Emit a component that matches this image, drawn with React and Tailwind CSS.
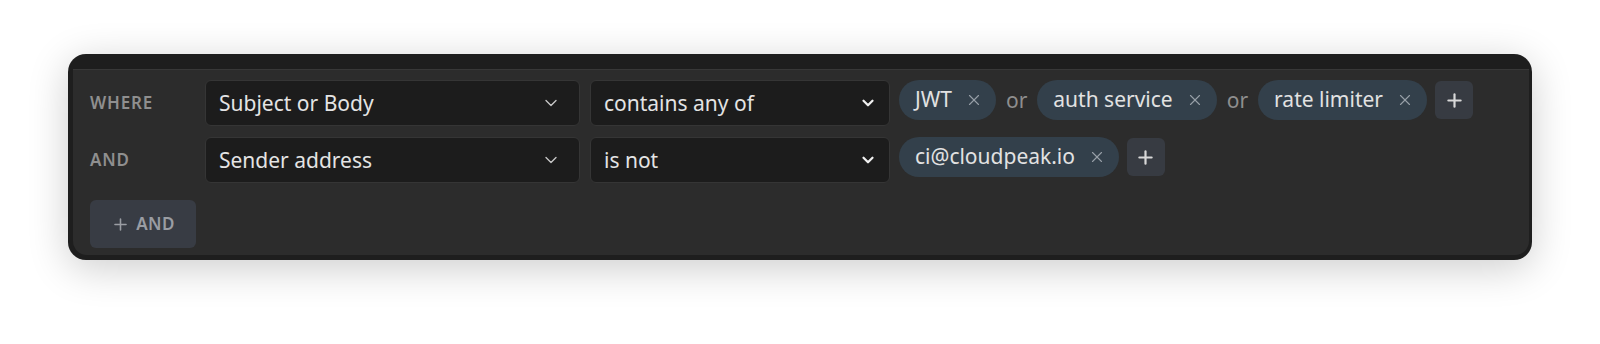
import { ChevronDown, X, Plus } from "lucide-react";

function Chip({ label }) {
  return (
    <div className="flex h-[40px] items-center gap-[13px] rounded-full bg-[#33404b] pl-[16px] pr-[13px] text-[21px] text-[#e2e2e2]">
      <span>{label}</span>
      <X size={18} strokeWidth={1.5} className="text-[#98a0a8]" />
    </div>
  );
}

function AddButton() {
  return (
    <button className="flex h-[38px] w-[38px] items-center justify-center rounded-md bg-[#373b42] text-[#d8d8d8]">
      <Plus size={21} strokeWidth={2.5} />
    </button>
  );
}

function Select({ value, width, native }) {
  return (
    <div
      className={`flex h-[46px] shrink-0 items-center justify-between rounded-md border border-[#353535] bg-[#1c1c1c] pl-[13px] text-[21px] text-[#e4e4e4] ${width} ${
        native ? "pr-[12px]" : "pr-[18px]"
      }`}
    >
      <span className="pt-[2px]">{value}</span>
      {native ? (
        <ChevronDown size={18} strokeWidth={3} className="text-[#f0f0f0]" />
      ) : (
        <ChevronDown size={20} strokeWidth={1.6} className="text-[#c8c8c8]" />
      )}
    </div>
  );
}

function Or() {
  return <span className="px-[10px] text-[21px] leading-[40px] text-[#8e8e8e]">or</span>;
}

export default function App() {
  return (
    <div
      className="min-h-screen bg-white px-[68px] pt-[54px]"
      style={{ fontFamily: '"Noto Sans", "Open Sans", sans-serif' }}
    >
      <div className="rounded-[18px] bg-[#1e1e1e] pb-[5px] pl-[5px] pr-[3px] pt-[15px] shadow-[0_8px_40px_rgba(0,0,0,0.2)]">
        <div className="rounded-b-[14px] border-t border-[#383838] bg-[#2c2c2c] pb-[7px] pl-[17px] pt-[10px]">
          {/* Row 1 */}
          <div className="flex items-start">
            <div className="flex h-[46px] w-[115px] items-center text-[17px] font-semibold tracking-wider text-[#8f8f8f]">
              WHERE
            </div>
            <Select value="Subject or Body" width="w-[375px]" />
            <div className="w-[10px]" />
            <Select value="contains any of" width="w-[300px]" native />
            <div className="flex items-center pl-[9px]">
              <Chip label="JWT" />
              <Or />
              <Chip label="auth service" />
              <Or />
              <Chip label="rate limiter" />
              <div className="w-[8px]" />
              <AddButton />
            </div>
          </div>

          {/* Row 2 */}
          <div className="mt-[11px] flex items-start">
            <div className="flex h-[46px] w-[115px] items-center text-[17px] font-semibold tracking-wider text-[#8f8f8f]">
              AND
            </div>
            <Select value="Sender address" width="w-[375px]" />
            <div className="w-[10px]" />
            <Select value="is not" width="w-[300px]" native />
            <div className="flex items-center gap-[8px] pl-[9px]">
              <Chip label="ci@cloudpeak.io" />
              <AddButton />
            </div>
          </div>

          <button className="mt-[17px] flex h-[48px] w-[106px] items-center justify-center gap-[6px] rounded-md bg-[#383c44] text-[17px] font-semibold tracking-wide text-[#9a9da3]">
            <Plus size={19} strokeWidth={2} />
            AND
          </button>
        </div>
      </div>
    </div>
  );
}
